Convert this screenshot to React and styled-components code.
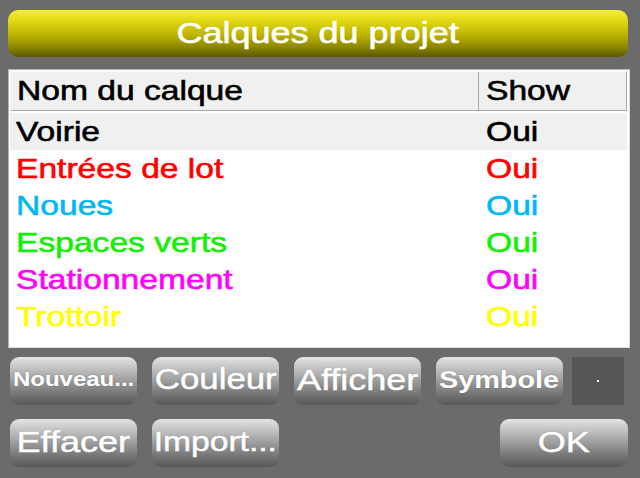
import React from 'react'
import styled, { createGlobalStyle } from 'styled-components'

const GlobalStyle = createGlobalStyle`
  html, body {
    margin: 0;
    padding: 0;
    background: #6b6b6b;
  }
  body {
    font-family: 'Liberation Sans', Arial, sans-serif;
  }
`

const layers = [
  { name: 'Voirie', show: 'Oui', color: '#000000', selected: true },
  { name: 'Entrées de lot', show: 'Oui', color: '#ff0000' },
  { name: 'Noues', show: 'Oui', color: '#00b8f4' },
  { name: 'Espaces verts', show: 'Oui', color: '#16ee08' },
  { name: 'Stationnement', show: 'Oui', color: '#ff00ff' },
  { name: 'Trottoir', show: 'Oui', color: '#ffff00' }
]

const App = () => {
  return (
    <>
      <GlobalStyle />
      <Screen>
        <TitleBar>
          <Wide $origin='center'>Calques du projet</Wide>
        </TitleBar>

        <Table>
          <HeaderRow>
            <NameCell>
              <Wide>Nom du calque</Wide>
            </NameCell>
            <ShowCell $divider>
              <Wide>Show</Wide>
            </ShowCell>
          </HeaderRow>
          {layers.map((layer) => (
            <Row key={layer.name} $selected={layer.selected} $color={layer.color}>
              <NameCell>
                <Wide>{layer.name}</Wide>
              </NameCell>
              <ShowCell>
                <Wide>{layer.show}</Wide>
              </ShowCell>
            </Row>
          ))}
        </Table>

        <Buttons>
          <ButtonRow>
            <Button $size={20} $bold>
              <Wide $origin='center' $stroke={0.2}>Nouveau...</Wide>
            </Button>
            <Button $size={29}>
              <Wide $origin='center'>Couleur</Wide>
            </Button>
            <Button $size={30}>
              <Wide $origin='center'>Afficher</Wide>
            </Button>
            <Button $size={24} $bold>
              <Wide $origin='center' $stroke={0.2}>Symbole</Wide>
            </Button>
            <SymbolBox>
              <Dot />
            </SymbolBox>
          </ButtonRow>
          <ButtonRow>
            <Button $size={30}>
              <Wide $origin='center'>Effacer</Wide>
            </Button>
            <Button $size={28}>
              <Wide $origin='center'>Import...</Wide>
            </Button>
            <OkButton $size={30}>
              <Wide $origin='center'>OK</Wide>
            </OkButton>
          </ButtonRow>
        </Buttons>
      </Screen>
    </>
  )
}

const Screen = styled.div`
  width: 640px;
  height: 478px;
  box-sizing: border-box;
  padding: 10px 10px 0 8px;
  display: flex;
  flex-direction: column;
  overflow: hidden;
`

// text on the device is drawn wider and heavier than Arial
const Wide = styled.span`
  display: inline-block;
  white-space: nowrap;
  transform: scaleX(1.2);
  transform-origin: ${(p) => p.$origin || 'left'} center;
  -webkit-text-stroke: ${(p) => (p.$stroke !== undefined ? p.$stroke : 0.6)}px currentColor;
`

const TitleBar = styled.div`
  height: 47px;
  margin-right: 2px;
  border-radius: 10px;
  background: linear-gradient(#f6ee3a 0%, #e2d914 22%, #bab100 55%, #8a8400 80%, #5c5800 100%);
  color: #ffffff;
  font-size: 30px;
  display: flex;
  align-items: center;
  justify-content: center;
  padding-bottom: 2px;
  box-sizing: border-box;
`

const Table = styled.div`
  margin-top: 12px;
  height: 279px;
  box-sizing: border-box;
  border: 1px solid #b4b4b4;
  border-right-color: #dcdcdc;
  border-bottom-color: #dcdcdc;
  background: #ffffff;
  padding: 1px 2px 0 1px;
  font-size: 28px;
`

const HeaderRow = styled.div`
  display: grid;
  grid-template-columns: 467px 1fr;
  height: 40px;
  background: #f0f0f0;
  border: 1px solid #a8a8a8;
  border-top-color: #f8f8f8;
  border-left-color: #f8f8f8;
  box-sizing: border-box;
  color: #000000;
  margin-bottom: 2px;
`

const Row = styled.div`
  display: grid;
  grid-template-columns: 468px 1fr;
  height: 37px;
  background: ${(p) => (p.$selected ? '#f0f0f0' : 'transparent')};
  color: ${(p) => p.$color};
`

const NameCell = styled.div`
  display: flex;
  align-items: center;
  padding-left: 6px;
  overflow: hidden;
`

const ShowCell = styled.div`
  display: flex;
  align-items: center;
  padding-left: 7px;
  border-left: ${(p) => (p.$divider ? '1px solid #a8a8a8' : '1px solid transparent')};
`

const Buttons = styled.div`
  margin-top: 9px;
  display: flex;
  flex-direction: column;
  gap: 14px;
  padding-left: 2px;
`

const ButtonRow = styled.div`
  display: flex;
  align-items: center;
  gap: 15px;
`

const Button = styled.div`
  width: 127px;
  height: 48px;
  box-sizing: border-box;
  border-radius: 9px;
  background: linear-gradient(#e4e4e4 0%, #c4c4c4 22%, #9c9c9c 50%, #787878 75%, #585858 100%);
  color: #ffffff;
  font-size: ${(p) => p.$size}px;
  font-weight: ${(p) => (p.$bold ? 700 : 400)};
  text-shadow: 0 0 1px #3a3a3a;
  display: flex;
  align-items: center;
  justify-content: center;
  padding-bottom: 3px;
  overflow: hidden;
`

const OkButton = styled(Button)`
  width: 128px;
  margin-left: auto;
  margin-right: 2px;
`

const SymbolBox = styled.div`
  width: 52px;
  height: 48px;
  margin-left: -6px;
  background: #565656;
  display: flex;
  align-items: center;
  justify-content: center;
`

const Dot = styled.div`
  width: 2px;
  height: 2px;
  background: #ffffff;
`

export default App
